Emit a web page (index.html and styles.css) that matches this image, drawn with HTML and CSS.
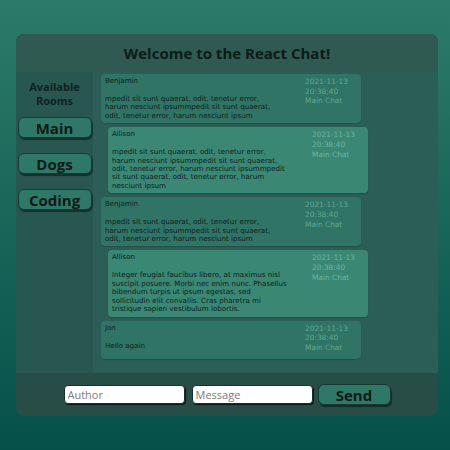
FILE: index.html
```html
<!DOCTYPE html>
<html lang="en">
<head>
<meta charset="utf-8">
<title>React Chat</title>
<link rel="stylesheet" href="styles.css">
</head>
<body>
<div class="app">
  <header class="app-header"><h1>Welcome to the React Chat!</h1></header>
  <div class="app-body">
    <aside class="rooms">
      <h2>Available Rooms</h2>
      <button class="btn room-btn">Main</button>
      <button class="btn room-btn">Dogs</button>
      <button class="btn room-btn">Coding</button>
    </aside>
    <section class="messages">
      <div class="message-list">
        <div class="msg">
          <div class="msg-main">
            <p class="msg-author">Benjamin</p>
            <p class="msg-text">mpedit sit sunt quaerat, odit, tenetur error, harum nesciunt ipsummpedit sit sunt quaerat, odit, tenetur error, harum nesciunt ipsum</p>
          </div>
          <div class="msg-meta"><span>2021-11-13</span><span>20:38:40</span><span>Main Chat</span></div>
        </div>
        <div class="msg msg-alt">
          <div class="msg-main">
            <p class="msg-author">Allison</p>
            <p class="msg-text">mpedit sit sunt quaerat, odit, tenetur error, harum nesciunt ipsummpedit sit sunt quaerat, odit, tenetur error, harum nesciunt ipsummpedit sit sunt quaerat, odit, tenetur error, harum nesciunt ipsum</p>
          </div>
          <div class="msg-meta"><span>2021-11-13</span><span>20:38:40</span><span>Main Chat</span></div>
        </div>
        <div class="msg">
          <div class="msg-main">
            <p class="msg-author">Benjamin</p>
            <p class="msg-text">mpedit sit sunt quaerat, odit, tenetur error, harum nesciunt ipsummpedit sit sunt quaerat, odit, tenetur error, harum nesciunt ipsum</p>
          </div>
          <div class="msg-meta"><span>2021-11-13</span><span>20:38:40</span><span>Main Chat</span></div>
        </div>
        <div class="msg msg-alt">
          <div class="msg-main">
            <p class="msg-author">Allison</p>
            <p class="msg-text">Integer feugiat faucibus libero, at maximus nisl suscipit posuere. Morbi nec enim nunc. Phasellus bibendum turpis ut ipsum egestas, sed sollicitudin elit convallis. Cras pharetra mi tristique sapien vestibulum lobortis.</p>
          </div>
          <div class="msg-meta"><span>2021-11-13</span><span>20:38:40</span><span>Main Chat</span></div>
        </div>
        <div class="msg">
          <div class="msg-main">
            <p class="msg-author">Jon</p>
            <p class="msg-text">Hello again</p>
          </div>
          <div class="msg-meta"><span>2021-11-13</span><span>20:38:40</span><span>Main Chat</span></div>
        </div>
        <div class="msg msg-alt">
          <div class="msg-main">
            <p class="msg-author">Allison</p>
            <p class="msg-text">Hello</p>
          </div>
          <div class="msg-meta"><span>2021-11-13</span><span>20:38:40</span><span>Main Chat</span></div>
        </div>
      </div>
    </section>
  </div>
  <form class="composer">
    <input class="field" type="text" placeholder="Author">
    <input class="field" type="text" placeholder="Message">
    <button class="btn send-btn" type="button">Send</button>
  </form>
</div>
</body>
</html>
```

FILE: styles.css
```css
html, body {
  margin: 0;
  padding: 0;
}

body {
  min-height: 450px;
  background: linear-gradient(#2c7b68, #06504a);
  font-family: "Open Sans", "Liberation Sans", sans-serif;
  color: #0f211c;
  padding-top: 34px;
  box-sizing: border-box;
}

.app {
  width: 422px;
  margin-left: 16px;
  border-radius: 8px;
  overflow: hidden;
  background: #284d47;
}

.app-header {
  height: 38px;
  background: #2e5a52;
  display: flex;
  align-items: center;
  justify-content: center;
}

.app-header h1 {
  margin: 0;
  font-size: 15px;
  font-weight: 700;
  color: #0d1a17;
}

.app-body {
  display: flex;
  height: 301px;
}

.rooms {
  width: 77px;
  background: #28574f;
  display: flex;
  flex-direction: column;
  align-items: center;
  padding-top: 8px;
  box-sizing: border-box;
}

.rooms h2 {
  margin: 0 0 10px;
  font-size: 11px;
  line-height: 13.5px;
  font-weight: 700;
  text-align: center;
  color: #10221e;
}

.btn {
  background: #2e7867;
  border: 1px solid #173a33;
  border-radius: 6px;
  box-shadow: 1px 2px 1px rgba(0, 0, 0, 0.45);
  font-family: "Open Sans", "Liberation Sans", sans-serif;
  font-weight: 700;
  font-size: 15px;
  line-height: 18px;
  color: #0c1a17;
  padding: 0;
}

.room-btn {
  width: 74px;
  height: 21px;
  margin-bottom: 15px;
}

.messages {
  flex: 1;
  background: #2b5e56;
  padding: 0 0 10px 8px;
  display: flex;
  flex-direction: column;
}

.message-list {
  height: 291px;
  padding-top: 2px;
  box-sizing: border-box;
  overflow-y: auto;
}

.message-list::-webkit-scrollbar {
  width: 6px;
}

.message-list::-webkit-scrollbar-track {
  background: #0c5a50;
}

.message-list::-webkit-scrollbar-thumb {
  background: #0c5a50;
}

.msg {
  width: 260px;
  box-sizing: border-box;
  display: grid;
  grid-template-columns: 1fr 50px;
  column-gap: 22px;
  padding: 3px 6px 3px 4px;
  border-radius: 4px;
  margin-bottom: 4px;
  background: #2f7464;
  box-shadow: 0 1px 1px rgba(0, 0, 0, 0.15);
  font-family: "DejaVu Sans", "Open Sans", sans-serif;
}

.msg-alt {
  margin-left: 7px;
  background: #3a8774;
}

.msg-author {
  margin: 0 0 9px;
  font-size: 7px;
  line-height: 9px;
}

.msg-text {
  margin: 0;
  font-size: 7.1px;
  line-height: 8.4px;
}

.msg-meta {
  display: flex;
  flex-direction: column;
  font-size: 7.4px;
  line-height: 9.7px;
  padding-bottom: 3px;
  color: #62a893;
  white-space: nowrap;
}

.msg-alt .msg-meta {
  color: #6db6a1;
}

.composer {
  height: 43px;
  margin: 0;
  display: flex;
  align-items: center;
  justify-content: center;
}

.field {
  width: 121px;
  height: 19px;
  box-sizing: border-box;
  margin-right: 7px;
  padding: 0 3px;
  border: 1px solid #16302b;
  border-radius: 4px;
  background: #fff;
  box-shadow: 1px 1px 1px #0a1714;
  font-family: "Open Sans", "Liberation Sans", sans-serif;
  font-size: 11px;
  line-height: 15px;
  color: #222;
  outline: none;
}

.field + .field {
  margin-right: 5px;
}

.field::placeholder {
  color: #7b7b7b;
}

.send-btn {
  width: 73px;
  height: 21px;
}
```
